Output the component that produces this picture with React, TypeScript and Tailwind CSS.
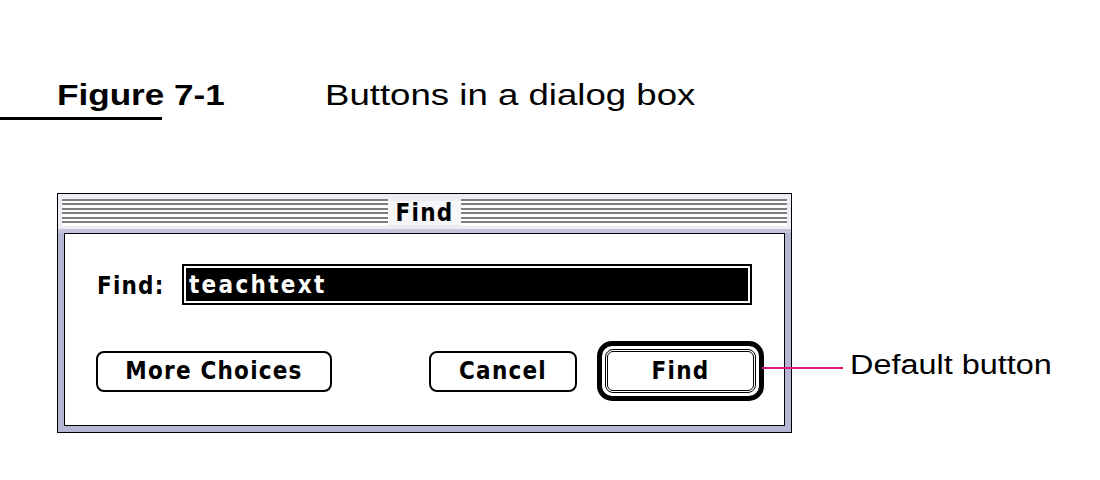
const chicago =
  "font-['DejaVu_Sans_Condensed','DejaVu_Sans','Liberation_Sans',sans-serif] font-bold tracking-[1.2px] text-[24px] leading-none";

const stripes =
  "h-[27px] flex-1 bg-[repeating-linear-gradient(to_bottom,#7e7e7e_0px,#7e7e7e_2px,#ffffff_2px,#ffffff_4.5px)]";

function MacButton({ label, width }: { label: string; width: string }) {
  return (
    <div
      className={`${width} flex h-[41px] items-center justify-center rounded-[8px] border-2 border-black bg-white text-black ${chicago}`}
    >
      {label}
    </div>
  );
}

function DefaultButton({ label }: { label: string }) {
  return (
    <div className="flex h-[60px] w-[167px] rounded-[15px] border-[5px] border-black bg-white p-[3px]">
      <div
        className={`flex flex-1 items-center justify-center rounded-[8px] border-[3px] border-double border-black text-black ${chicago}`}
      >
        {label}
      </div>
    </div>
  );
}

export default function App() {
  return (
    <main className="h-[480px] w-[1100px] overflow-hidden bg-white text-black font-['Liberation_Sans',Arial,sans-serif]">
      <header className="pt-[79px]">
        <div className="flex h-[31px] items-center pl-[57px] text-[30px] leading-[31px]">
          <span className="inline-block w-[268px]">
            <span className="inline-block origin-left scale-x-[1.17] font-bold">Figure 7-1</span>
          </span>
          <span className="inline-block origin-left scale-x-[1.22]">Buttons in a dialog box</span>
        </div>
        <div className="mt-[7px] h-[3px] w-[162px] bg-black" />
      </header>

      <section className="relative mt-[73px] flex items-start">
        {/* window frame */}
        <div className="ml-[57px] flex h-[240px] w-[735px] flex-col border border-black bg-[#b6b6d4]">
          <div className="flex h-[39px] flex-col bg-[#ececf2]">
            <div className="flex flex-1 items-center px-[4px] pt-[2px]">
              <div className={stripes} />
              <div className={`bg-[#f6f6f8] px-[8px] ${chicago}`}>Find</div>
              <div className={stripes} />
            </div>
            <div className="h-[4px] bg-[#c4c4dc]" />
          </div>

          <div className="mx-[6px] mb-[6px] flex flex-1 flex-col border border-black bg-white">
            <div className="mt-[30px] flex h-[41px] items-center pl-[32px]">
              <span className={`w-[85px] pt-[3px] ${chicago}`}>Find:</span>
              <div className="flex h-[41px] w-[570px] border-2 border-black bg-white p-[2px]">
                <div className={`flex flex-1 items-center bg-black pl-[3px] pt-[1px] text-white ${chicago} tracking-[2.3px]`}>
                  teachtext
                </div>
              </div>
            </div>

            <div className="mt-[36px] flex h-[60px] items-center justify-between pl-[31px] pr-[20px]">
              <MacButton label="More Choices" width="w-[236px]" />
              <div className="flex items-center gap-[20px]">
                <MacButton label="Cancel" width="w-[148px]" />
                <DefaultButton label="Find" />
              </div>
            </div>
          </div>
        </div>

        {/* callout */}
        <div className="absolute left-[762px] top-[174px] h-[2px] w-[81px] bg-[#e2157f]" />
        <span className="ml-[58px] mt-[158px] inline-block origin-left scale-x-[1.2] text-[27px] leading-[29px]">
          Default button
        </span>
      </section>
    </main>
  );
}
